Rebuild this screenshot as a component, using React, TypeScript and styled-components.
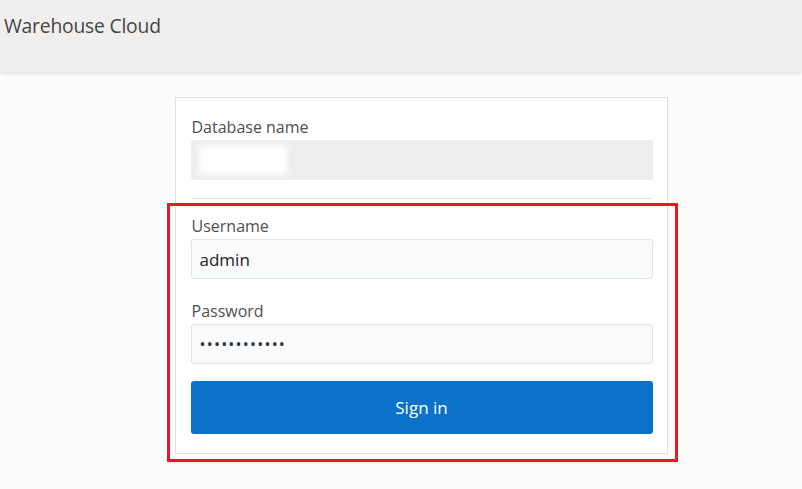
import React from "react";
import styled, { createGlobalStyle } from "styled-components";

const Global = createGlobalStyle`
  html, body { margin: 0; padding: 0; background: #fcfcfc; }
  body { font-family: "Open Sans", "Noto Sans", Arial, sans-serif; color: #4f4f4f; }
  * { box-sizing: border-box; }
`;

const Page = styled.div`
  width: 802px;
  height: 489px;
  overflow: hidden;
  display: flex;
  flex-direction: column;
  background: #fcfcfc;
`;

const Header = styled.header`
  height: 72px;
  background: #f0efed;
  box-shadow: 0 2px 4px rgba(0, 0, 0, 0.1);
  padding: 12px 4px 0;
  display: flex;
  align-items: flex-start;
`;

const Title = styled.h1`
  margin: 0;
  font-size: 19.3px;
  font-weight: 400;
  color: #444;
  letter-spacing: -0.2px;
`;

const Main = styled.main`
  display: flex;
  justify-content: center;
  padding: 25px 0 0 0;
`;

const Card = styled.div`
  width: 493px;
  margin-left: 40px;
  background: #ffffff;
  border: 1px solid #dbe2e2;
  padding: 17px 14px 19px 15px;
  display: flex;
  flex-direction: column;
`;

const Label = styled.label`
  display: block;
  font-size: 16px;
  line-height: 24px;
  color: #4f4f4f;
  margin-bottom: 1px;
  padding-left: 1px;
`;

const ReadonlyBox = styled.div`
  height: 40px;
  background: #eeeeee;
  border-radius: 3px;
  position: relative;
  overflow: hidden;
`;

const Redaction = styled.div`
  position: absolute;
  left: 8px;
  top: 5px;
  width: 88px;
  height: 30px;
  background: #ffffff;
  filter: blur(3px);
`;

const Divider = styled.hr`
  border: 0;
  border-top: 1px solid #dbe2e2;
  margin: 18px 0 15px;
`;

const LoginSection = styled.div`
  position: relative;
  display: flex;
  flex-direction: column;

  &::before {
    content: "";
    position: absolute;
    left: -24px;
    right: -25px;
    top: -11px;
    bottom: -28px;
    border: 3px solid #e31b23;
    pointer-events: none;
  }
`;

const Field = styled.div<{ $gap?: number }>`
  display: flex;
  flex-direction: column;
  margin-bottom: ${(p) => p.$gap ?? 0}px;
`;

const Input = styled.input`
  height: 40px;
  width: 100%;
  background: #f9fbfd;
  border: 1px solid #dfe4e7;
  border-radius: 3px;
  padding: 0 8px;
  font-family: inherit;
  font-size: 17px;
  color: #222;
  outline: none;
`;

const PasswordInput = styled(Input)`
  font-size: 16px;
  letter-spacing: 1.2px;
  color: #333;
`;

const Button = styled.button`
  height: 53px;
  width: 100%;
  background: #0a72c8;
  border: 0;
  border-radius: 3px;
  color: #ffffff;
  font-family: inherit;
  font-size: 17px;
  cursor: pointer;
`;

export default function App() {
  return (
    <>
      <Global />
      <Page>
        <Header>
          <Title>Warehouse Cloud</Title>
        </Header>
        <Main>
          <Card>
            <Field>
              <Label>Database name</Label>
              <ReadonlyBox>
                <Redaction />
              </ReadonlyBox>
            </Field>
            <Divider />
            <LoginSection>
              <Field $gap={20}>
                <Label>Username</Label>
                <Input defaultValue="admin" />
              </Field>
              <Field $gap={17}>
                <Label>Password</Label>
                <PasswordInput type="password" defaultValue="abcdefghijkl" />
              </Field>
              <Button>Sign in</Button>
            </LoginSection>
          </Card>
        </Main>
      </Page>
    </>
  );
}
